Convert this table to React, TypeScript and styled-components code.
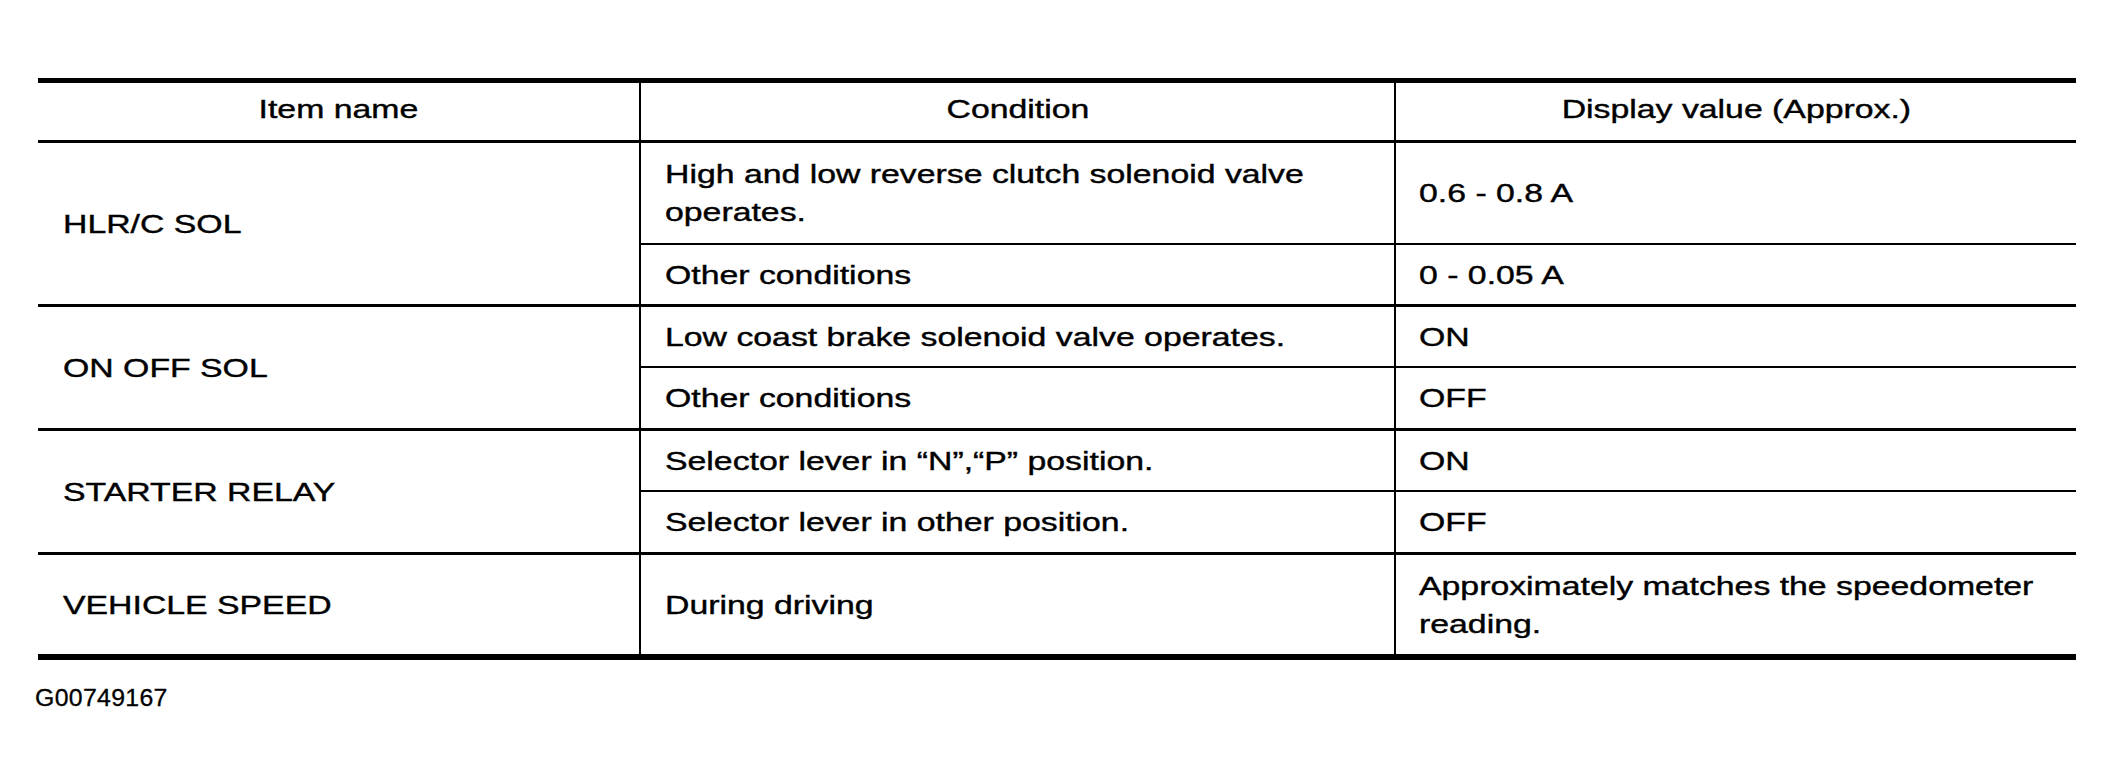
import React from 'react'
import styled, { createGlobalStyle } from 'styled-components'

interface SubRowData {
  condition: React.ReactNode;
  value: React.ReactNode;
  height: number;
}

interface GroupData {
  name: string;
  rows: SubRowData[];
}

const groups: GroupData[] = [
  {
    name: 'HLR/C SOL',
    rows: [
      { condition: <>High and low reverse clutch solenoid valve<br />operates.</>, value: '0.6 - 0.8 A', height: 100 },
      { condition: 'Other conditions', value: '0 - 0.05 A', height: 61 },
    ],
  },
  {
    name: 'ON OFF SOL',
    rows: [
      { condition: 'Low coast brake solenoid valve operates.', value: 'ON', height: 59 },
      { condition: 'Other conditions', value: 'OFF', height: 62 },
    ],
  },
  {
    name: 'STARTER RELAY',
    rows: [
      { condition: 'Selector lever in \u201cN\u201d,\u201cP\u201d position.', value: 'ON', height: 59 },
      { condition: 'Selector lever in other position.', value: 'OFF', height: 62 },
    ],
  },
  {
    name: 'VEHICLE SPEED',
    rows: [
      { condition: 'During driving', value: <>Approximately matches the speedometer<br />reading.</>, height: 99 },
    ],
  },
]

const App: React.FC = () => {
  return (
    <>
      <GlobalStyle />
      <Page>
        <Table>
          <HeaderRow>
            <HeadCell divider><Txt origin='center'>Item name</Txt></HeadCell>
            <HeadCell divider><Txt origin='center'>Condition</Txt></HeadCell>
            <HeadCell><Txt origin='center'>Display value (Approx.)</Txt></HeadCell>
          </HeaderRow>
          {groups.map((group, gi) => (
            <Group key={group.name} last={gi === groups.length - 1}>
              <NameCell><Txt>{group.name}</Txt></NameCell>
              <SubRows>
                {group.rows.map((row, ri) => (
                  <SubRow key={ri} first={ri === 0} h={row.height}>
                    <CondCell><Txt>{row.condition}</Txt></CondCell>
                    <ValueCell><Txt>{row.value}</Txt></ValueCell>
                  </SubRow>
                ))}
              </SubRows>
            </Group>
          ))}
        </Table>
        <FigureId>G00749167</FigureId>
      </Page>
    </>
  )
}

export default App

const GlobalStyle = createGlobalStyle`
  html, body {
    margin: 0;
    padding: 0;
    background: #ffffff;
    overflow: hidden;
  }
  body {
    font-family: "Liberation Sans", Arial, Helvetica, sans-serif;
    color: #000000;
  }
`

const Page = styled.div`
  padding: 78px 0 0 38px;
  background: #ffffff;
`

const Table = styled.div`
  width: 2038px;
  border-top: 5px solid #000;
  border-bottom: 6px solid #000;
`

const HeaderRow = styled.div`
  display: grid;
  grid-template-columns: 603px 755px 1fr;
  height: 60px;
  box-sizing: border-box;
  border-bottom: 3px solid #000;
`

const HeadCell = styled.div<{ divider?: boolean }>`
  display: flex;
  align-items: center;
  justify-content: center;
  padding-bottom: 6px;
  box-sizing: border-box;
  border-right: ${p => (p.divider ? '2px solid #000' : 'none')};
`

const Txt = styled.span<{ origin?: string }>`
  display: inline-block;
  font-size: 26px;
  line-height: 38px;
  white-space: nowrap;
  -webkit-text-stroke: 0.4px #000;
  transform: scaleX(1.3);
  transform-origin: ${p => p.origin || 'left'} center;
`

const Group = styled.div<{ last?: boolean }>`
  display: grid;
  grid-template-columns: 603px 1fr;
  border-bottom: ${p => (p.last ? 'none' : '3px solid #000')};
`

const NameCell = styled.div`
  display: flex;
  align-items: center;
  padding-left: 25px;
  box-sizing: border-box;
  border-right: 2px solid #000;
`

const SubRows = styled.div`
  display: flex;
  flex-direction: column;
`

const SubRow = styled.div<{ first?: boolean; h: number }>`
  display: grid;
  grid-template-columns: 755px 1fr;
  height: ${p => p.h}px;
  box-sizing: border-box;
  border-top: ${p => (p.first ? 'none' : '2px solid #000')};
`

const CondCell = styled.div`
  display: flex;
  align-items: center;
  padding-left: 24px;
  box-sizing: border-box;
  border-right: 2px solid #000;
`

const ValueCell = styled.div`
  display: flex;
  align-items: center;
  padding-left: 23px;
  box-sizing: border-box;
`

const FigureId = styled.div`
  display: inline-block;
  margin: 25px 0 0 -3px;
  font-size: 23px;
  line-height: 26px;
  letter-spacing: 0.3px;
  -webkit-text-stroke: 0.3px #000;
  transform: scaleX(1.08);
  transform-origin: left center;
`
